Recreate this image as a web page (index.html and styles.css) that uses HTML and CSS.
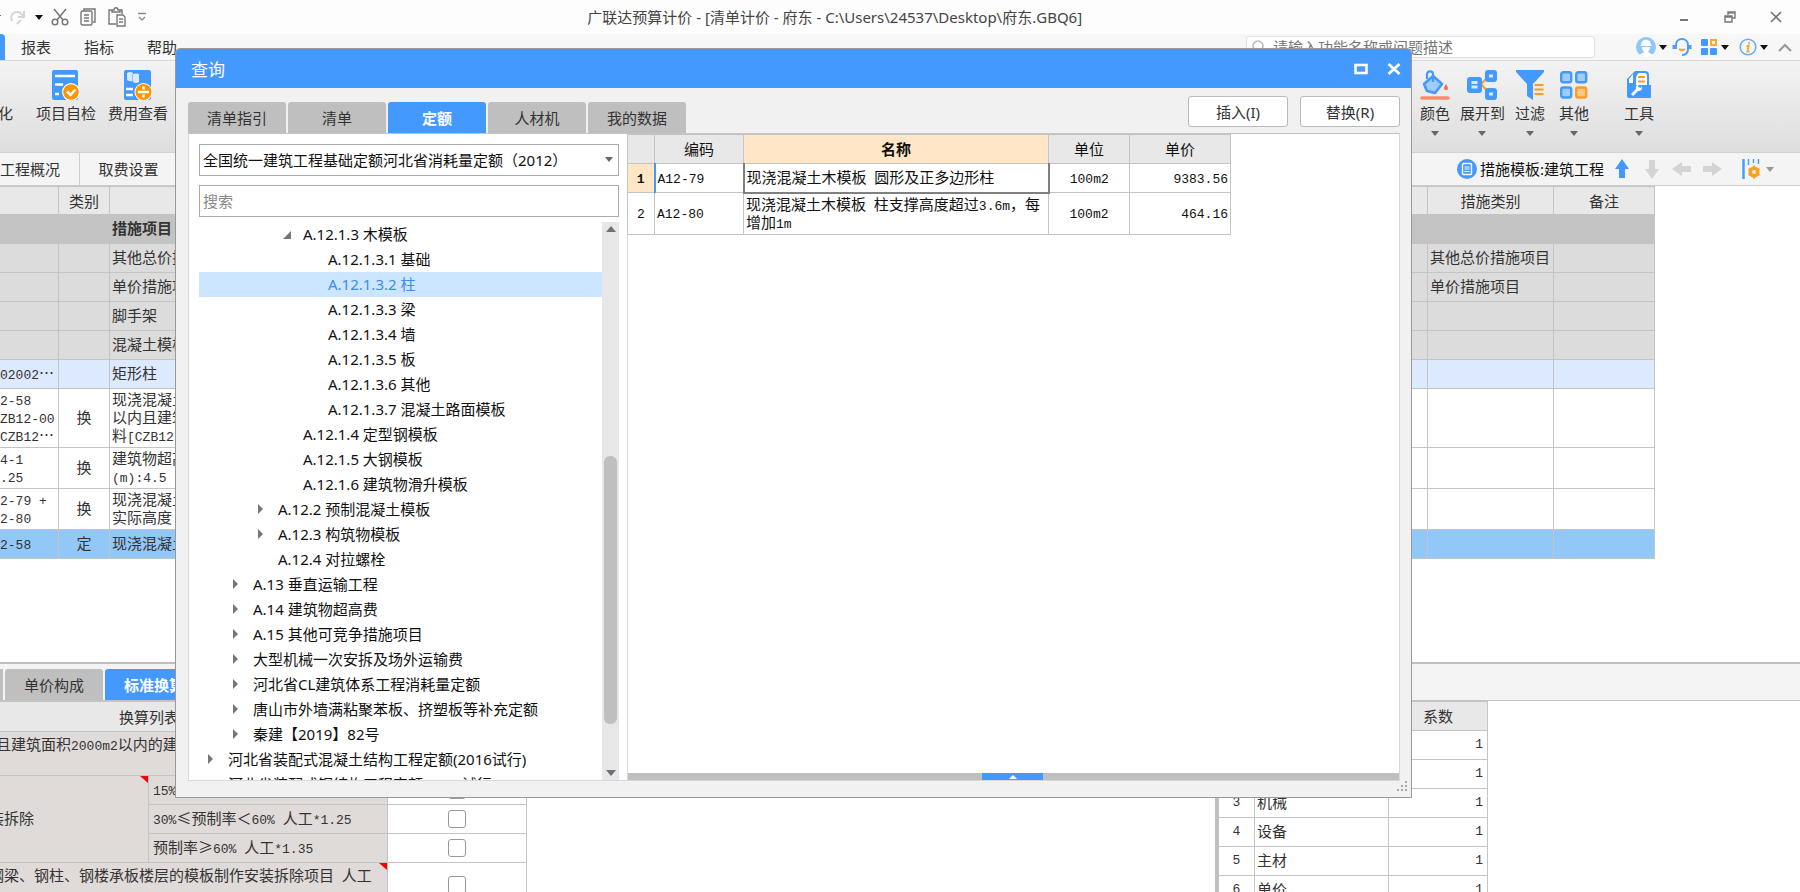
FILE: index.html
```html
<!DOCTYPE html>
<html lang="zh-CN">
<head>
<meta charset="utf-8">
<title>广联达预算计价</title>
<link rel="stylesheet" href="styles.css">
</head>
<body>
<svg class="defs" aria-hidden="true">
  <symbol id="caret" viewBox="0 0 8 5"><path d="M0 0h8L4 5z"/></symbol>
  <symbol id="arrow" viewBox="0 0 20 20"><path d="M10 0l7 10h-4v9H7v-9H3z"/></symbol>
</svg>
<div class="app">
  <header class="titlebar">
    <div class="quick">
      <svg class="caret dark" aria-hidden="true"><use href="#caret"/></svg>
      <button aria-label="重做"><svg width="18" height="18" viewBox="0 0 18 18" fill="none" stroke="#d6d6d6" stroke-width="2"><path d="M3 13C1 9 3 4 8 4c3 0 5 2 7 5M15 3v6H9M8 16l4-4"/></svg></button>
      <svg class="caret dark" aria-hidden="true"><use href="#caret"/></svg>
      <button aria-label="剪切"><svg width="18" height="18" viewBox="0 0 18 18" fill="none" stroke="#777" stroke-width="1.5"><path d="M3 1l9 11M15 1L6 12"/><circle cx="4" cy="14" r="2.8"/><circle cx="14" cy="14" r="2.8"/></svg></button>
      <button aria-label="复制"><svg width="18" height="18" viewBox="0 0 18 18" fill="none" stroke="#777" stroke-width="1.4"><path d="M5 3V1h11v13h-2"/><rect x="2" y="3" width="11" height="14" rx="1.5"/><path d="M5 7h5M5 10h5M5 13h5"/></svg></button>
      <button aria-label="粘贴"><svg width="20" height="20" viewBox="0 0 20 20" fill="none" stroke="#777" stroke-width="1.4"><path d="M9 17H2V3h3M12 3h3v4M5 5V3h2c0-3 4-3 4 0h2v2z"/><path d="M10 8h6l2 2v9h-8zM12 12h4M12 15h4"/></svg></button>
      <button aria-label="更多"><svg width="10" height="10" viewBox="0 0 10 10" fill="none" stroke="#888" stroke-width="1.3"><path d="M1 1.5h8M2 5l3 3 3-3"/></svg></button>
    </div>
    <h1 class="app-title">广联达预算计价 - [清单计价 - 府东 - C:\Users\24537\Desktop\府东.GBQ6]</h1>
    <div class="window-buttons">
      <button aria-label="最小化"><svg width="12" height="12" viewBox="0 0 12 12"><path d="M2 8h8v2H2z" fill="#777"/></svg></button>
      <button aria-label="还原"><svg width="12" height="12" viewBox="0 0 12 12" fill="none" stroke="#777" stroke-width="1.4"><path d="M4 4V1h7v6H8"/><path d="M4 2h7" /><path d="M1 5h7v6H1zM1 6h7"/></svg></button>
      <button aria-label="关闭"><svg width="12" height="12" viewBox="0 0 12 12" stroke="#777" stroke-width="1.7"><path d="M1 1l10 10M11 1L1 11"/></svg></button>
    </div>
  </header>

  <nav class="menubar">
    <span class="menu-active"></span>
    <a href="#">报表</a><a href="#">指标</a><a href="#">帮助</a>
    <label class="finder">
      <svg width="16" height="16" viewBox="0 0 16 16" fill="none" stroke="#bbb" stroke-width="1.6"><circle cx="7" cy="7" r="5"/><path d="M11 11l3 4"/></svg>
      <input type="text" placeholder="请输入功能名称或问题描述" aria-label="功能搜索">
    </label>
    <div class="account">
      <svg width="20" height="20" viewBox="0 0 20 20"><circle cx="10" cy="10" r="10" fill="#8fc6fb"/><path d="M5 8c0-7 10-7 10 0l1 1H4zM6 10h8c0 3-2 5-2 5l5 3c-4 3-10 3-14 0l5-3s-2-2-2-5z" fill="#fff"/></svg>
      <svg class="caret dark"><use href="#caret"/></svg>
      <svg class="headset" width="20" height="20" viewBox="0 0 20 20" fill="none" stroke="#4a9dff" stroke-width="2"><path d="M4 12V8c0-8 12-8 12 0v4c0 4-2 6-6 6"/><path d="M2 8v4M18 8v4" stroke-width="3"/><path d="M7 12q3 2 6 0" stroke="#ff9d1e"/></svg>
      <svg width="18" height="18" viewBox="0 0 18 18"><g fill="#4499fe"><rect x="1" y="1" width="7" height="7" rx="1"/><rect x="1" y="10" width="7" height="7" rx="1"/><rect x="10" y="10" width="7" height="7" rx="1"/></g><rect x="11" y="2" width="5" height="5" fill="none" stroke="#ffa735" stroke-width="2"/></svg>
      <svg class="caret dark"><use href="#caret"/></svg>
      <svg class="info" width="18" height="18" viewBox="0 0 18 18" fill="none"><circle cx="9" cy="9" r="7.8" stroke="#67adff" stroke-width="1.6"/><path d="M10 4.2v2M7.5 8h2l-1 5.5h2" stroke="#ffa735" stroke-width="2"/></svg>
      <svg class="caret dark"><use href="#caret"/></svg>
      <svg class="fold" width="14" height="10" viewBox="0 0 14 10" fill="none" stroke="#999" stroke-width="2.2"><path d="M1 9l6-6 6 6"/></svg>
    </div>
  </nav>

  <div class="toolbar">
    <button class="tool tool-cut"><span class="tool-icon"></span>化</button>
    <button class="tool tool-check">
      <svg width="30" height="30" viewBox="0 0 30 30"><rect x="1" y="0" width="26" height="30" rx="2" fill="#4499fe"/><path d="M4 6h20M4 14.500h8M4 24h4" stroke="#fff" stroke-width="2.4"/><circle cx="20" cy="22" r="9" fill="#fff"/><circle cx="20" cy="22" r="7.800" fill="#ff9500"/><path d="M16 21.500l3.500 3.500 5-5.500" fill="none" stroke="#fff" stroke-width="2.500"/></svg>项目自检</button>
    <button class="tool">
      <svg width="30" height="30" viewBox="0 0 30 30"><rect x="1" y="0" width="27" height="30" rx="2" fill="#4499fe"/><path d="M4 3q3-2 6 0v1q3-1 6 0v8q-3 2-6 0v-1q-3 1-6-1z" fill="#d9eaff"/><path d="M9.500 4v7" stroke="#8fc0fb"/><path d="M3 19h7M3 25h7" stroke="#fff" stroke-width="2.4"/><circle cx="20.500" cy="22" r="9" fill="#fff"/><circle cx="20.500" cy="22" r="8" fill="#ff9500"/><path d="M15 22h11M20.500 16.500v3M20.500 24.500v3" stroke="#fff" stroke-width="2.4"/></svg>费用查看</button>
    <div class="tools-right">
      <button class="tool"><svg width="30" height="30" viewBox="0 0 30 30"><path d="M4 14l9-8 9 8-7 9-8-2z" fill="#9fcbfd" stroke="#4499fe" stroke-width="2.6" stroke-linejoin="round"/><path d="M7 9V4c1-4 6-3 6 0v8" fill="none" stroke="#4499fe" stroke-width="2.2"/><path d="M26 14c3 4 2 6 0 6s-3-2 0-6z" fill="#ff6a45"/><path d="M2 28h26" stroke="#ff8a6b" stroke-width="3.600" stroke-linecap="round"/></svg>颜色<svg class="caret"><use href="#caret"/></svg></button>
      <button class="tool"><svg width="30" height="30" viewBox="0 0 30 30"><path d="M14 14l8-8M14 14l8 9" stroke="#ff9d1e" stroke-width="2"/><g fill="#4499fe"><rect x="0" y="7" width="15" height="16" rx="3"/><rect x="18" y="0" width="12" height="12" rx="3"/><rect x="18" y="18" width="12" height="12" rx="3"/></g><path d="M4.500 12.500h6M4.500 17h6M22 6h4M22 24h4" stroke="#d8eaff" stroke-width="3"/></svg>展开到<svg class="caret"><use href="#caret"/></svg></button>
      <button class="tool"><svg width="30" height="30" viewBox="0 0 30 30"><path d="M1 0h28v2L18 14v16l-6-4V14L1 2z" fill="#4499fe"/><path d="M18 13h12v14H18z" fill="#ebebeb"/><path d="M19.500 15h9M19.500 19.500h9M19.500 24h9" stroke="#ff9d1e" stroke-width="2"/></svg>过滤<svg class="caret"><use href="#caret"/></svg></button>
      <button class="tool tool-other"><svg width="30" height="30" viewBox="0 0 30 30" fill="#9fcbfd" stroke="#4499fe" stroke-width="2.4"><rect x="2.200" y="2.200" width="10" height="10" rx="2"/><rect x="17.200" y="2.200" width="10" height="10" rx="2"/><rect x="2.200" y="17.500" width="10" height="10" rx="2"/><rect x="17.200" y="17.500" width="10" height="10" rx="2" fill="#ffc885" stroke="#ff9d1e"/></svg>其他<svg class="caret"><use href="#caret"/></svg></button>
      <button class="tool tool-kit"><svg width="30" height="30" viewBox="0 0 30 30"><path d="M3 26V9l8-8h10q4 0 4 4v10h2v12q0 1-1 1H6q-3 0-3-2z" fill="#4499fe"/><path d="M13 5q1-2 3-2h4q3 0 3 3v9H12V8z" fill="#fff"/><path d="M14 7h7M14 11.500h7" stroke="#ff9d1e" stroke-width="2.200"/><path d="M5 13V9l4-5v9z" fill="#fff"/><path d="M7 24l5-5q-1-4 3-5l-1 3 3 1 1-2q1 5-4 5l-5 5z" fill="#fff"/></svg>工具<svg class="caret"><use href="#caret"/></svg></button>
    </div>
  </div>

  <div class="subbar">
    <button class="page-tab">工程概况</button>
    <button class="page-tab page-tab-set">取费设置</button>
    <div class="template">
      <svg width="20" height="20" viewBox="0 0 20 20"><circle cx="10" cy="10" r="10" fill="#4499fe"/><rect x="5.500" y="4.500" width="9" height="11" rx="1" fill="none" stroke="#fff" stroke-width="1.400"/><path d="M7.500 8h5M7.500 10h5M7.500 12.500h5" stroke="#fff"/></svg>
      <span class="template-name">措施模板:建筑工程</span>
      <button class="move up" aria-label="上移"><svg width="20" height="20"><use href="#arrow"/></svg></button>
      <button class="move down" aria-label="下移"><svg width="20" height="20"><use href="#arrow"/></svg></button>
      <button class="move left" aria-label="左移"><svg width="20" height="20"><use href="#arrow"/></svg></button>
      <button class="move right" aria-label="右移"><svg width="20" height="20"><use href="#arrow"/></svg></button>
      <button class="columns" aria-label="列设置"><svg width="18" height="20" viewBox="0 0 18 20"><path d="M1.500 0v20" stroke="#4499fe" stroke-width="2.400"/><path d="M6.500 0v6M11.500 0v4M16.500 0v5" stroke="#4499fe" stroke-width="1.400"/><circle cx="12" cy="13" r="4" fill="none" stroke="#ff9d1e" stroke-width="3"/><path d="M12 6.500v13M6.500 10l11 6M6.500 16l11-6" stroke="#ff9d1e" stroke-width="2"/><circle cx="12" cy="13" r="1.900" fill="#f4f4f4"/></svg></button>
      <svg class="caret faint"><use href="#caret"/></svg>
    </div>
  </div>

  <main class="upper">
    <table class="sheet measures">
      <colgroup><col class="m-code"><col class="m-kind"><col><col class="m-type"><col class="m-note"></colgroup>
      <thead><tr><th></th><th>类别</th><th></th><th>措施类别</th><th>备注</th></tr></thead>
      <tbody>
        <tr class="total"><td></td><td></td><td>措施项目</td><td></td><td></td></tr>
        <tr class="group"><td></td><td></td><td>其他总价措施项目</td><td>其他总价措施项目</td><td></td></tr>
        <tr class="group"><td></td><td></td><td>单价措施项目</td><td>单价措施项目</td><td></td></tr>
        <tr class="group"><td></td><td></td><td>脚手架</td><td></td><td></td></tr>
        <tr class="group"><td></td><td></td><td>混凝土模板</td><td></td><td></td></tr>
        <tr class="item"><td><span class="m">02002</span>⋯</td><td></td><td>矩形柱</td><td></td><td></td></tr>
        <tr><td><span class="m">2-58<br>ZB12-00<br>CZB12</span>⋯</td><td>换</td><td>现浇混凝土<br>以内且建筑<br>料<span class="m">[CZB12-</span></td><td></td><td></td></tr>
        <tr><td><span class="m">4-1<br>.25</span></td><td>换</td><td>建筑物超高<br><span class="m">(m):4.5</span></td><td></td><td></td></tr>
        <tr><td><span class="m">2-79 +<br>2-80</span></td><td>换</td><td>现浇混凝土<br>实际高度</td><td></td><td></td></tr>
        <tr class="current"><td><span class="m">2-58</span></td><td>定</td><td>现浇混凝土</td><td></td><td></td></tr>
      </tbody>
    </table>
  </main>

  <section class="lower">
    <div class="lower-tabs">
      <span class="tab-end"></span>
      <button class="tab">单价构成</button>
      <button class="tab active">标准换算</button>
    </div>
    <div class="lower-body">
      <table class="sheet convert">
        <colgroup><col class="c-group"><col class="c-rule"><col class="c-pick"></colgroup>
        <thead><tr><th colspan="2" class="convert-title">换算列表</th><th></th></tr></thead>
        <tbody>
          <tr class="tall"><td colspan="2" class="shade cut-a">且建筑面积<span class="m">2000m2</span>以内的建</td><td></td></tr>
          <tr><td rowspan="3" class="shade cut-b flag">装拆除</td><td class="shade rule"><span class="m">15%</span></td><td class="pick"><input type="checkbox" aria-label="15%"></td></tr>
          <tr><td class="shade rule"><span class="m">30%</span>≤预制率＜<span class="m">60% </span>人工<span class="m">*1.25</span></td><td class="pick"><input type="checkbox" aria-label="30%≤预制率＜60%"></td></tr>
          <tr><td class="shade rule">预制率≥<span class="m">60% </span>人工<span class="m">*1.35</span></td><td class="pick"><input type="checkbox" aria-label="预制率≥60%"></td></tr>
          <tr class="tall"><td colspan="2" class="shade cut-b flag">钢梁、钢柱、钢楼承板楼层的模板制作安装拆除项目<span class="m"> </span>人工</td><td class="pick"><input type="checkbox" aria-label="模板制作安装拆除项目"></td></tr>
        </tbody>
      </table>
      <div class="factor-pane">
        <table class="sheet factors">
          <colgroup><col class="f-no"><col class="f-name"><col class="f-value"></colgroup>
          <thead><tr><th></th><th></th><th>系数</th></tr></thead>
          <tbody class="m">
            <tr><td>1</td><td></td><td>1</td></tr>
            <tr><td>2</td><td></td><td>1</td></tr>
            <tr><td>3</td><td class="cn">机械</td><td>1</td></tr>
            <tr><td>4</td><td class="cn">设备</td><td>1</td></tr>
            <tr><td>5</td><td class="cn">主材</td><td>1</td></tr>
            <tr><td>6</td><td class="cn">单价</td><td>1</td></tr>
          </tbody>
        </table>
      </div>
    </div>
  </section>

  <section class="dialog" role="dialog" aria-labelledby="dialog-title">
    <header class="dialog-head">
      <h2 id="dialog-title">查询</h2>
      <button aria-label="最大化"><svg width="14" height="14" viewBox="0 0 14 14"><rect x="1.500" y="3" width="11" height="8" fill="none" stroke="#fff" stroke-width="2.600"/></svg></button>
      <button aria-label="关闭"><svg width="14" height="14" viewBox="0 0 14 14" stroke="#fff" stroke-width="2.800"><path d="M1.500 2l11 10M12.500 2l-11 10"/></svg></button>
    </header>
    <div class="dialog-bar">
      <div class="dialog-tabs">
        <button class="tab">清单指引</button>
        <button class="tab">清单</button>
        <button class="tab active">定额</button>
        <button class="tab">人材机</button>
        <button class="tab">我的数据</button>
      </div>
      <div class="dialog-actions">
        <button class="action">插入(I)</button>
        <button class="action">替换(R)</button>
      </div>
    </div>
    <div class="dialog-body">
      <div class="side">
        <div class="picker">
          <select aria-label="定额库"><option>全国统一建筑工程基础定额河北省消耗量定额（2012）</option></select>
          <svg class="caret"><use href="#caret"/></svg>
        </div>
        <input class="search" type="text" placeholder="搜索" aria-label="搜索">
        <div class="tree-box">
          <ul class="tree" role="tree">
            <li class="l4 open">A.12.1.3 木模板</li>
            <li class="l5">A.12.1.3.1 基础</li>
            <li class="l5 selected">A.12.1.3.2 柱</li>
            <li class="l5">A.12.1.3.3 梁</li>
            <li class="l5">A.12.1.3.4 墙</li>
            <li class="l5">A.12.1.3.5 板</li>
            <li class="l5">A.12.1.3.6 其他</li>
            <li class="l5">A.12.1.3.7 混凝土路面模板</li>
            <li class="l4">A.12.1.4 定型钢模板</li>
            <li class="l4">A.12.1.5 大钢模板</li>
            <li class="l4">A.12.1.6 建筑物滑升模板</li>
            <li class="l3 shut">A.12.2 预制混凝土模板</li>
            <li class="l3 shut">A.12.3 构筑物模板</li>
            <li class="l3">A.12.4 对拉螺栓</li>
            <li class="l2 shut">A.13 垂直运输工程</li>
            <li class="l2 shut">A.14 建筑物超高费</li>
            <li class="l2 shut">A.15 其他可竞争措施项目</li>
            <li class="l2 shut">大型机械一次安拆及场外运输费</li>
            <li class="l2 shut">河北省CL建筑体系工程消耗量定额</li>
            <li class="l2 shut">唐山市外墙满粘聚苯板、挤塑板等补充定额</li>
            <li class="l2 shut">秦建【2019】82号</li>
            <li class="l1 shut">河北省装配式混凝土结构工程定额(2016试行)</li>
            <li class="l1">河北省装配式钢结构工程定额(2018试行)</li>
          </ul>
          <div class="scrollbar">
            <svg class="scroll-up" width="10" height="6" viewBox="0 0 10 6"><path d="M0 6h10L5 0z"/></svg>
            <div class="track"><div class="thumb"></div></div>
            <svg width="10" height="6" viewBox="0 0 10 6"><path d="M0 0h10L5 6z"/></svg>
          </div>
        </div>
      </div>
      <div class="results">
        <table class="sheet quota">
          <colgroup><col class="q-no"><col class="q-code"><col class="q-name"><col class="q-unit"><col class="q-price"></colgroup>
          <thead><tr><th></th><th>编码</th><th class="picked">名称</th><th>单位</th><th>单价</th></tr></thead>
          <tbody>
            <tr><td class="no picked"><span class="m">1</span></td><td><span class="m">A12-79</span></td><td class="focus">现浇混凝土木模板<span class="m"> </span>圆形及正多边形柱</td><td class="unit"><span class="m">100m2</span></td><td class="price"><span class="m">9383.56</span></td></tr>
            <tr><td class="no"><span class="m">2</span></td><td><span class="m">A12-80</span></td><td>现浇混凝土木模板<span class="m"> </span>柱支撑高度超过<span class="m">3.6m</span>，每增加<span class="m">1m</span></td><td class="unit"><span class="m">100m2</span></td><td class="price"><span class="m">464.16</span></td></tr>
          </tbody>
        </table>
        <div class="drawer"><button aria-label="展开"><svg width="8" height="4" viewBox="0 0 8 4"><path d="M0 4h8L4 0z" fill="#fff"/></svg></button></div>
      </div>
    </div>
    <svg class="grip" width="10" height="12" viewBox="0 0 10 12" fill="#aaa"><path d="M8 0h2v2H8zM4 4h2v2H4zM8 4h2v2H8zM0 8h2v2H0zM4 8h2v2H4zM8 8h2v2H8z"/></svg>
  </section>
</div>
</body>
</html>
```

FILE: styles.css
```css
* { box-sizing: border-box; }

body {
  margin: 0;
  font: 15px/20px "Noto Sans", "Noto Sans CJK SC", sans-serif;
  color: #333;
  background: #fff;
}

button {
  font: inherit;
  color: inherit;
  padding: 0;
  border: 0;
  background: none;
}

svg { display: block; flex: none; }
.defs { position: absolute; width: 0; height: 0; }

.m { font-family: "Liberation Mono", monospace; font-size: 13px; line-height: 11px; white-space: pre-wrap; }

.caret { width: 8px; height: 5px; fill: #666; }
.caret.dark { fill: #111; }
.caret.faint { fill: #999; }

.app {
  position: relative;
  display: flex;
  flex-direction: column;
  height: 100vh;
  overflow: hidden;
}

/* title bar */
.titlebar {
  display: grid;
  grid-template-columns: 45fr auto 55fr;
  align-items: center;
  height: 34px;
  flex: none;
  background: #fdfdfd;
}
.quick { display: flex; align-items: center; gap: 10px; margin-left: -5px; }
.quick .caret { margin: 0 -2px; }
.app-title { margin: 0; font-size: 15px; font-weight: 400; white-space: nowrap; color: #444; }
.window-buttons { display: flex; justify-content: flex-end; gap: 34px; padding-right: 18px; }

/* menu */
.menubar {
  display: flex;
  align-items: center;
  gap: 33px;
  height: 27px;
  flex: none;
  background: #f7f7f7;
  border-bottom: 1px solid #d9d9d9;
}
.menubar a { color: #333; text-decoration: none; }
.menu-active { width: 5px; height: 26px; margin-right: -17px; background: #4499fe; border-radius: 0 4px 0 0; }
.finder {
  display: flex;
  align-items: center;
  gap: 6px;
  width: 349px;
  height: 22px;
  margin-left: auto;
  padding-left: 4px;
  background: #fff;
  border: 1px solid #e0e0e0;
  border-radius: 3px;
}
.finder input { flex: 1; min-width: 0; padding: 0; border: 0; outline: 0; background: none; font: inherit; }
.finder input::placeholder { color: #777; opacity: 1; }
.account { display: flex; align-items: center; gap: 3px; padding-right: 8px; margin-left: 8px; }
.account .headset { margin-left: 2px; }
.account svg + svg.info, .account .fold { margin-left: 7px; }
.headset + svg { margin-left: 5px; }

/* ribbon */
.toolbar {
  display: flex;
  align-items: flex-start;
  height: 92px;
  flex: none;
  padding: 9px 146px 0 0;
  background: linear-gradient(#f3f3f3, #dedede);
  border-bottom: 1px solid #d0d0d0;
}
.tool { display: flex; flex-direction: column; align-items: center; line-height: 26px; white-space: nowrap; }
.tool .caret { margin-top: 5px; }
.tool-icon { height: 30px; }
.tool-cut { margin-left: -2px; }
.tool-check { margin: 0 12px 0 23px; }
.tools-right { display: flex; gap: 10px; margin-left: auto; }
.tool-other { margin-left: 4px; }
.tool-kit { margin-left: 25px; }

/* page tabs and template */
.subbar {
  display: flex;
  align-items: stretch;
  height: 33px;
  flex: none;
  background: #f4f4f4;
  border-bottom: 1px solid #ccc;
}
.page-tab { width: 80px; padding-right: 21px; border-right: 1px solid #ccc; white-space: nowrap; }
.page-tab-set { width: 98px; padding: 0; }
.template { display: flex; align-items: center; margin-left: auto; padding-right: 26px; color: #111; }
.template-name { margin: 0 8px 0 3px; }
.move { margin-right: 10px; fill: #d4d4d4; }
.move.up { fill: #4499fe; }
.down svg { transform: rotate(180deg); }
.left svg { transform: rotate(270deg); }
.right svg { transform: rotate(90deg); }
.columns { margin: 0 6px 0 10px; }

/* tables */
.sheet { border-collapse: collapse; table-layout: fixed; font-family: "Noto Sans CJK SC", sans-serif; line-height: 18px; }
.sheet th { height: 29px; padding: 0; font-weight: 400; background: #e8e8e8; border: 1px solid #c4c4c4; }
.sheet td { height: 29px; padding: 1px 2px 3px; border: 1px solid #c4c4c4; }

.upper { flex: 1; min-height: 0; overflow: hidden; }
.measures { width: 92%; margin-left: -1px; white-space: nowrap; }
.measures th { height: 28px; }
.m-code { width: 59px; }
.m-kind { width: 51px; }
.m-type { width: 126px; }
.m-note { width: 101px; }
.measures td:first-child { padding-left: 0; }
.measures td:nth-child(2) { text-align: center; }
.measures td:nth-child(3) { max-width: 0; overflow: hidden; }
.total td { background: #c3c3c3; font-weight: 700; }
.group td { background: #dcdcdc; }
.item td { background: #dde9ff; }
.current td { background: #92c8f8; }

/* lower pane */
.lower { display: flex; flex-direction: column; flex: 0 0 230px; overflow: hidden; border-top: 2px solid #bfbfbf; }
.lower-tabs {
  display: flex;
  align-items: flex-end;
  gap: 2px;
  height: 37px;
  flex: none;
  background: #f4f4f4;
  border-bottom: 1px solid #c4c4c4;
}
.tab-end { width: 3px; height: 31px; background: #bfbfbf; }
.tab { width: 98px; height: 31px; background: #bfbfbf; border-radius: 3px 3px 0 0; }
.tab.active { background: #4499fe; color: #fff; font-weight: 700; }
.lower-body { display: grid; grid-template-columns: 1fr 585px; align-items: start; }
.convert { width: 527px; margin-left: -1px; }
.c-group { width: 149px; }
.c-rule { width: 239px; }
.c-pick { width: 139px; }
.sheet .convert-title { height: 30px; padding-right: 89px; }
.convert .tall td { height: 44px; }
.convert .tall .shade { vertical-align: top; padding-top: 3px; }
.convert .shade { background: #e0dbd9; }
.convert .cut-a { padding-left: 0; text-indent: -4px; }
.convert .cut-b { padding-left: 0; text-indent: -11px; }
.convert .rule { padding-left: 4px; }
.convert .pick { text-align: center; vertical-align: middle; padding: 0; }
.pick input { appearance: none; display: block; width: 18px; height: 18px; margin: 0 auto; border: 1px solid #999; border-radius: 3px; background: #fff; }
.flag { position: relative; }
.flag::after { content: ""; position: absolute; top: 0; right: 0; border-top: 7px solid #f00; border-left: 8px solid transparent; }
.factor-pane { border-left: 3px solid #bfbfbf; }
.factors { width: 269px; }
.f-no { width: 36px; }
.f-name { width: 134px; }
.f-value { width: 99px; }
.factors td:first-child { text-align: center; }
.factors td:last-child { text-align: right; padding-right: 4px; }
.factors .cn { font: 15px/18px "Noto Sans CJK SC", sans-serif; }

/* query dialog */
.dialog {
  position: absolute;
  inset: 48px 388px 94px 175px;
  display: flex;
  flex-direction: column;
  padding-bottom: 16px;
  background: #f1f1f1;
  border: 1px solid #999;
  border-radius: 5px 5px 0 0;
}
.dialog-head {
  display: flex;
  align-items: center;
  gap: 19px;
  height: 39px;
  flex: none;
  padding: 0 10px 0 15px;
  background: #4499fe;
  border-radius: 4px 4px 0 0;
  color: #fff;
}
.dialog-head h2 { margin: 0 auto 0 0; padding-top: 2px; font-size: 17px; line-height: 24px; font-weight: 400; }
.dialog-bar { display: flex; align-items: flex-end; justify-content: space-between; height: 45px; flex: none; padding: 0 11px 0 12px; }
.dialog-tabs { display: flex; gap: 2px; }
.dialog-actions { display: flex; gap: 12px; padding-bottom: 6px; }
.action { width: 100px; height: 31px; background: #fff; border: 1px solid #bbb; border-radius: 3px; }
.dialog-body { display: flex; flex: 1; min-height: 0; margin: 0 11px 0 12px; background: #fff; border: 1px solid #d8d8d8; border-top-color: #c4c4c4; }
.side { display: flex; flex-direction: column; width: 439px; padding: 10px 8px 0 10px; border-right: 1px solid #d8d8d8; color: #111; }
.picker { position: relative; margin-bottom: 9px; }
.picker select, .search {
  display: block;
  width: 100%;
  height: 32px;
  padding: 0 3px;
  border: 1px solid #aaa;
  border-radius: 0;
  background: #fff;
  font: inherit;
  color: #111;
}
.picker select { appearance: none; }
.picker .caret { position: absolute; right: 6px; top: 13px; }
.search { flex: none; }
.search::placeholder { color: #888; opacity: 1; }
.tree-box { display: flex; flex: 1; min-height: 0; margin-top: 5px; overflow: hidden; }
.tree { flex: 1; margin: 0; padding: 0; list-style: none; line-height: 25px; white-space: nowrap; }
.tree li { position: relative; height: 25px; }
.l1 { padding-left: 29px; }
.l2 { padding-left: 54px; }
.l3 { padding-left: 79px; }
.l4 { padding-left: 104px; }
.l5 { padding-left: 129px; }
.selected { background: #cbe6fe; color: #3c8cf0; }
.shut::before, .open::before { content: ""; position: absolute; }
.shut::before { top: 7px; margin-left: -20px; border-left: 5px solid #777; border-top: 5px solid transparent; border-bottom: 5px solid transparent; }
.open::before { top: 9px; margin-left: -20px; border-bottom: 8px solid #777; border-left: 8px solid transparent; }
.scrollbar { display: flex; flex-direction: column; align-items: center; width: 17px; padding: 4px 0; background: #e7e7e7; fill: #70707c; }
.track { display: flex; flex: 1; width: 13px; padding: 224px 0 46px; }
.thumb { flex: 1; background: #bfbfbf; border-radius: 6px; }
.results { display: flex; flex-direction: column; justify-content: space-between; align-items: stretch; flex: 1; }
.quota { width: 603px; color: #111; margin-left: -1px; }
.q-no { width: 27px; }
.q-code { width: 89px; }
.q-name { width: 305px; }
.q-unit { width: 81px; }
.q-price { width: 101px; }
.sheet .picked { background: #ffe6c7; font-weight: 700; }
.quota .no { text-align: center; }
.quota .no.picked { border-right: 2px solid #4499fe; }
.quota .focus { border: 2px solid #808080; border-top: 1px solid #4499fe; }
.quota .unit { text-align: center; }
.quota .price { text-align: right; }
.drawer { display: flex; justify-content: center; height: 7px; padding-right: 2px; background: #bfbfbf; }
.drawer button { display: flex; align-items: center; justify-content: center; width: 61px; background: #4499fe; }
.grip { position: absolute; right: 4px; bottom: 4px; }
```
